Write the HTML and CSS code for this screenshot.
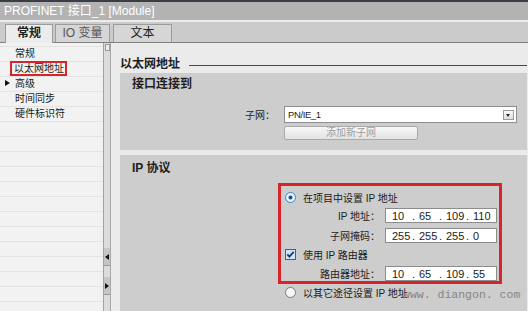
FILE: index.html
```html
<!DOCTYPE html>
<html lang="zh-CN">
<head>
  <meta charset="UTF-8" />
  <title>PROFINET 接口_1 [Module]</title>
  <link rel="stylesheet" href="styles.css">
</head>
<body>
  <!-- 标题栏 -->
  <div class="titlebar">PROFINET 接口_1 [Module]</div>

  <!-- 选项卡 -->
  <div class="tabstrip">
    <div class="tab active">常规</div>
    <div class="tab muted">IO 变量</div>
    <div class="tab">文本</div>
  </div>

  <div class="content">
    <!-- 左侧导航 -->
    <nav class="nav">
      <div class="nav-item">常规</div>
      <div class="nav-item"><span class="marked">以太网地址</span></div>
      <div class="nav-item"><span class="caret"></span>高级</div>
      <div class="nav-item">时间同步</div>
      <div class="nav-item">硬件标识符</div>
    </nav>

    <!-- 分隔条 -->
    <div class="splitter">
      <span class="grip"></span>
      <span class="collapse"><span class="tri left"></span></span>
      <span class="collapse"><span class="tri right"></span></span>
    </div>

    <main class="main">
      <div class="page-title"><span>以太网地址</span><span class="rule"></span></div>

      <section class="group connect">
        <h3>接口连接到</h3>
        <div class="subnet-row">
          <label>子网：</label>
          <div class="select">
            <span class="value">PN/IE_1</span>
            <span class="arrow"></span>
          </div>
        </div>
        <button class="add-btn">添加新子网</button>
      </section>

      <section class="group ip">
        <h3>IP 协议</h3>
        <div class="highlight">
          <div class="option">
            <svg class="radio" width="11" height="11" viewBox="0 0 11 11">
              <circle cx="5.5" cy="5.5" r="5" fill="#eaf4fc" stroke="#3c7fc0" />
              <circle cx="5.5" cy="5.5" r="2" fill="#1a4f8f" />
            </svg>
            在项目中设置 IP 地址
          </div>
          <div class="field">
            <label>IP 地址：</label>
            <div class="ipbox"><span class="oct">10</span><span class="dot">.</span><span class="oct">65</span><span class="dot">.</span><span class="oct">109</span><span class="dot">.</span><span class="oct">110</span></div>
          </div>
          <div class="field">
            <label>子网掩码：</label>
            <div class="ipbox"><span class="oct">255</span><span class="dot">.</span><span class="oct">255</span><span class="dot">.</span><span class="oct">255</span><span class="dot">.</span><span class="oct">0</span></div>
          </div>
          <div class="option check">
            <svg class="radio" width="11" height="11" viewBox="0 0 11 11">
              <rect x="0.5" y="0.5" width="10" height="10" fill="#cfe4f7" stroke="#2f64a6" />
              <path d="M2.3 5.4 L4.4 7.6 L8.7 2.8" fill="none" stroke="#143d78" stroke-width="1.8" />
            </svg>
            使用 IP 路由器
          </div>
          <div class="field router">
            <label>路由器地址：</label>
            <div class="ipbox"><span class="oct">10</span><span class="dot">.</span><span class="oct">65</span><span class="dot">.</span><span class="oct">109</span><span class="dot">.</span><span class="oct">55</span></div>
          </div>
        </div>
        <div class="option other">
          <svg class="radio" width="11" height="11" viewBox="0 0 11 11">
            <circle cx="5.5" cy="5.5" r="5" fill="#f6f6f6" stroke="#7a7a7a" />
          </svg>
          以其它途径设置 IP 地址
        </div>
        <div class="watermark">www. diangon. com</div>
      </section>
    </main>
  </div>
</body>
</html>
```

FILE: styles.css
```css
/* 重置样式 */
* { margin: 0; padding: 0; box-sizing: border-box; }
html, body { width: 528px; height: 311px; overflow: hidden; }
body {
  font-family: "Liberation Sans", "Noto Sans CJK SC", sans-serif;
  font-size: 10px;
  color: #1e1e1e;
  background: #e9e9e9;
  display: flex; flex-direction: column;
}

/* 标题栏 */
.titlebar {
  height: 20px;
  border-top: 2px solid #3b3d44;
  background: #b3b3b3;
  color: #fff;
  font-size: 12px; line-height: 18px;
  padding-left: 4px;
}

/* 选项卡 */
.tabstrip {
  height: 23px;
  border-top: 2px solid #ececec;
  border-bottom: 1px solid #7f7f7f;
  background: #cbcbcb;
  display: flex; align-items: flex-end;
  padding-left: 5px;
}
.tab {
  height: 18px;
  margin-right: 2px;
  border: 1px solid #9c9c9c; border-bottom: none;
  background: #d6d6d6;
  font-size: 12px; line-height: 16px;
  text-align: center;
  color: #222;
}
.tab:nth-child(1) { width: 48px; }
.tab:nth-child(2) { width: 55px; }
.tab:nth-child(3) { width: 59px; margin-left: 1px; }
.tab.active {
  height: 19px; margin-bottom: -1px;
  background: #ececec;
  font-weight: bold;
}
.tab.muted { color: #555; }

.content { flex: 1; display: flex; min-height: 0; }

/* 左侧导航 */
.nav {
  width: 103px;
  padding-top: 3px;
  background-color: #f2f2f2;
  background-image: repeating-linear-gradient(to bottom, #e3e3e3 0, #e3e3e3 1px, transparent 1px, transparent 15px);
  background-position: 0 3px;
}
.nav-item {
  height: 15px; line-height: 15px;
  padding-left: 15px;
  position: relative;
  color: #1a1a1a;
}
.nav-item .marked {
  display: inline-block;
  margin-left: -5px;
  padding: 0 1px 0 2px;
  height: 15px; line-height: 11px;
  border: 2px solid #d6242c;
}
.nav-item .caret {
  position: absolute; left: 5px; top: 4px;
  border-left: 5px solid #111;
  border-top: 3.5px solid transparent;
  border-bottom: 3.5px solid transparent;
}

/* 分隔条 */
.splitter {
  width: 8px;
  border-left: 1px solid #a2a2a2;
  border-right: 1px solid #a8a8a8;
  background: #dcdcdc;
  display: flex; flex-direction: column; align-items: center;
}
.grip {
  width: 5px; height: 7px; margin-top: 1px;
  border: 1px solid #9a9a9a; background: #eee;
}
.collapse {
  width: 6px; height: 18px;
  background: #c6c6c6;
  border-bottom: 1px solid #999;
  display: flex; align-items: center; justify-content: center;
}
.collapse:nth-of-type(2) { margin-top: 197px; }
.collapse:nth-of-type(3) { margin-top: 11px; }
.tri { border-top: 3px solid transparent; border-bottom: 3px solid transparent; }
.tri.left { border-right: 4px solid #111; }
.tri.right { border-left: 4px solid #111; }

/* 主区域 */
.main {
  flex: 1;
  padding: 0 1px 0 9px;
  display: flex; flex-direction: column;
  background: #ebebeb;
}
.page-title {
  margin-top: 12px; margin-bottom: 4px;
  height: 14px;
  display: flex; align-items: center;
  font-size: 12px; font-weight: bold;
}
.page-title .rule {
  flex: 1;
  margin: 6px 0 0 9px;
  border-top: 1px solid #4a4a4a;
}

.group { background: #cdcdcd; }
.group h3 {
  font-size: 12px; line-height: 14px;
  padding-left: 12px;
}
.connect { height: 77px; padding-top: 4px; }
.subnet-row {
  margin-top: 15px;
  height: 17px;
  display: flex; align-items: center;
}
.subnet-row label {
  width: 164px; padding-right: 9px;
  text-align: right;
  color: #222;
}
.select {
  width: 233px; height: 17px;
  background: #fff;
  border: 1px solid #8e8e8e;
  display: flex; align-items: center; justify-content: space-between;
  padding-left: 3px;
}
.select .value { font-size: 9.5px; letter-spacing: -0.4px; color: #222; }
.select .arrow {
  width: 11px; height: 10px; margin-right: 2px;
  border: 1px solid #9b9b9b;
  background: linear-gradient(#fafafa, #dedede);
  position: relative;
}
.select .arrow:after {
  content: '';
  position: absolute; left: 2px; top: 3px;
  border-top: 3px solid #222;
  border-left: 2.5px solid transparent;
  border-right: 2.5px solid transparent;
}
.add-btn {
  display: block;
  margin: 3px 0 0 164px;
  width: 134px; height: 14px;
  font-family: inherit; font-size: 10px; line-height: 12px;
  color: #9d9d9d;
  border: 1px solid #a9a9a9; border-radius: 2px;
  background: linear-gradient(#f8f8f8, #e2e2e2);
}

/* IP 协议 */
.ip {
  flex: 1;
  margin-top: 5px;
  padding-top: 6px;
  position: relative;
}
.highlight {
  margin: 8px 0 0 158px;
  width: 224px;
  border: 3px solid #d6242c;
  padding: 5px 0 0 4px;
}
.option {
  height: 12px;
  display: flex; align-items: center;
  color: #1a1a1a;
}
.option .radio { margin-right: 7px; flex: none; }
.option.check { margin-top: 5px; }
.option.other { margin: 2px 0 0 165px; }

.field {
  margin-top: 5px;
  height: 15px;
  display: flex; align-items: center;
}
.field.router { margin-top: 6px; }
.field label {
  width: 95px; margin-right: 5px;
  text-align: right;
  color: #222;
}
.ipbox {
  width: 112px; height: 15px;
  background: #fff;
  border: 1px solid #8c8c8c;
  display: flex; align-items: center;
  padding-left: 6px;
  font-size: 11px;
  color: #222;
}
.ipbox .oct { width: 20px; }
.ipbox .dot { width: 7px; }

/* 水印 */
.watermark {
  position: absolute; left: 283px; top: 133px;
  font-family: "Liberation Mono", monospace;
  font-size: 11.5px;
  color: #858585;
}
```
